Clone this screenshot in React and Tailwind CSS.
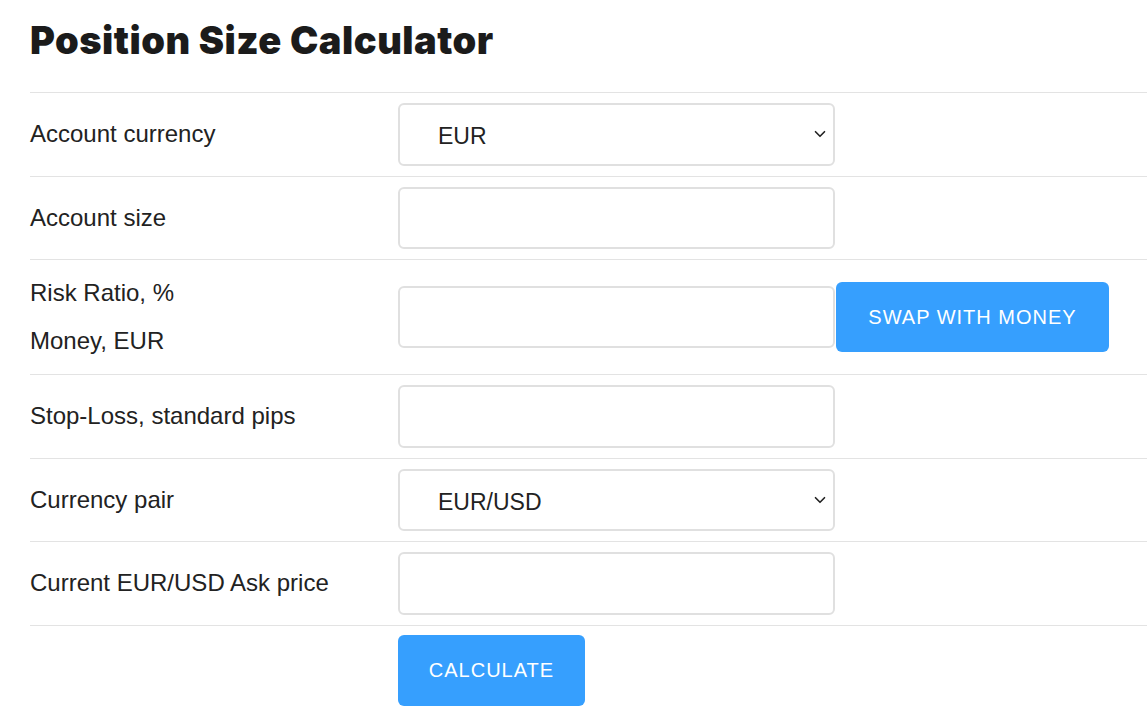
import { ChevronDown } from "lucide-react";

const inputCls =
  "h-[62.5px] w-[437px] rounded-[6px] border-2 border-[#e0e0e0] bg-white px-[38px] text-[23px] text-[#222] outline-none";

function Row({ label, children }) {
  return (
    <div className="flex items-center border-t border-[#e3e3e3] py-[10px]">
      <div className="w-[368px] shrink-0 text-[24px] text-[#222]">{label}</div>
      {children}
    </div>
  );
}

function SelectBox({ value }) {
  return (
    <div className={`${inputCls} relative flex items-center pt-[4px]`}>
      <span>{value}</span>
      <ChevronDown size={18} strokeWidth={2.2} className="absolute right-[4px] top-[20px] text-[#222]" />
    </div>
  );
}

export default function App() {
  return (
    <div className="min-h-[706px] bg-white pl-[30px] font-['Liberation_Sans',Arial,sans-serif]">
      <h1 className="pt-[12px] pb-[24px] font-['Inter',sans-serif] text-[38px] font-black leading-[56px] tracking-[0.5px] text-[#1b1b1b]">
        Position Size Calculator
      </h1>

      <Row label="Account currency">
        <SelectBox value="EUR" />
      </Row>
      <Row label="Account size">
        <input className={inputCls} />
      </Row>
      <div className="flex items-center border-t border-[#e3e3e3] py-[9px]">
        <div className="w-[368px] shrink-0 text-[24px] leading-[48px] text-[#222]">
          <div>Risk Ratio, %</div>
          <div>Money, EUR</div>
        </div>
        <input className={inputCls} />
        <button className="ml-[1px] h-[70px] w-[273px] rounded-[6px] bg-[#369ffe] text-[20px] tracking-[1px] text-white">
          SWAP WITH MONEY
        </button>
      </div>
      <Row label="Stop-Loss, standard pips">
        <input className={inputCls} />
      </Row>
      <Row label="Currency pair">
        <SelectBox value="EUR/USD" />
      </Row>
      <Row label="Current EUR/USD Ask price">
        <input className={inputCls} />
      </Row>
      <div className="flex border-t border-[#e3e3e3] pt-[9px]">
        <div className="w-[368px] shrink-0" />
        <button className="h-[71px] w-[187px] rounded-[6px] bg-[#369ffe] text-[20px] tracking-[1px] text-white">
          CALCULATE
        </button>
      </div>
    </div>
  );
}
